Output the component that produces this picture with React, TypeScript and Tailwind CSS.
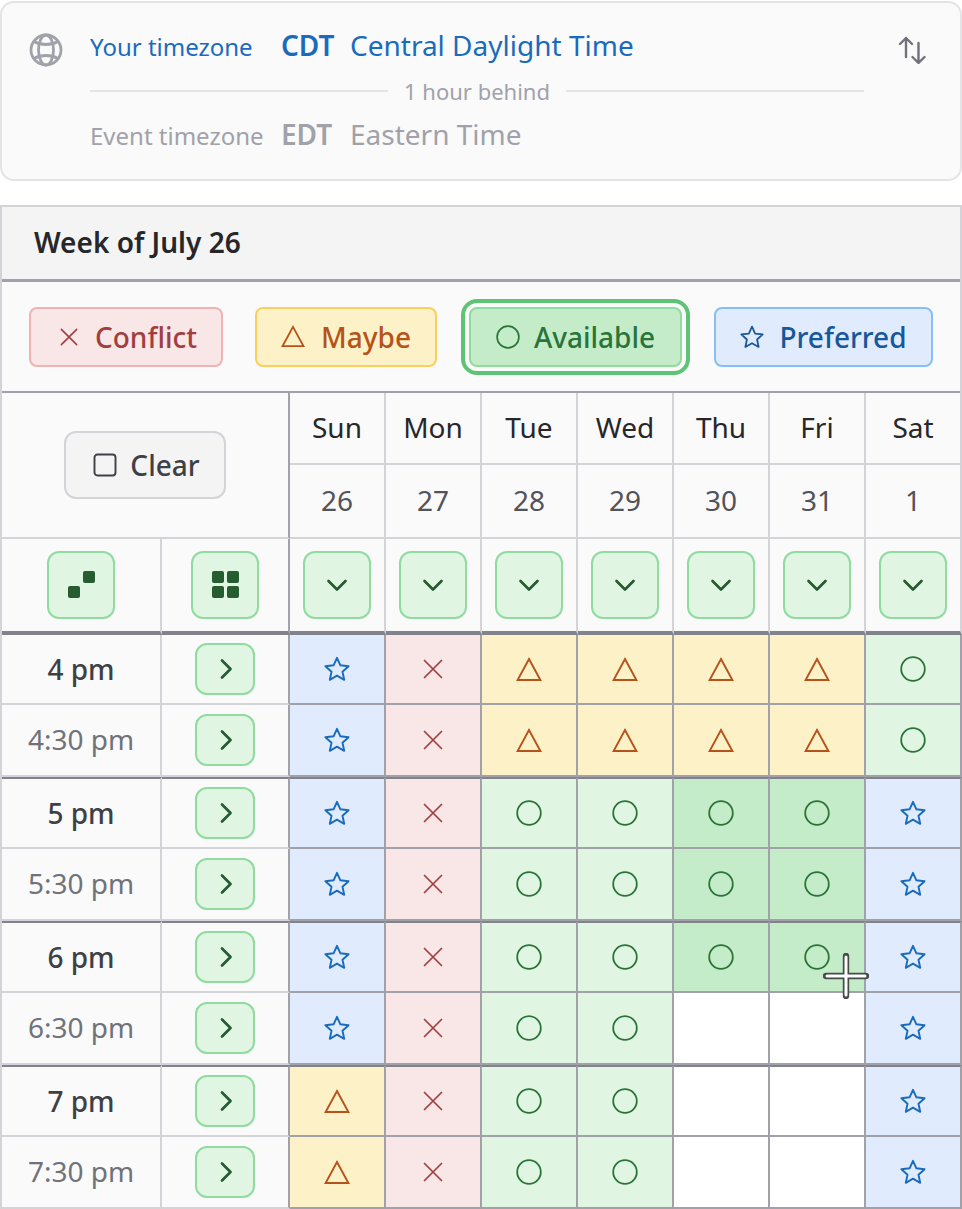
import React from 'react';

type Mark = 's' | 'x' | 'm' | 'a' | 'A' | 'e';

const days = [
  ['Sun', '26'],
  ['Mon', '27'],
  ['Tue', '28'],
  ['Wed', '29'],
  ['Thu', '30'],
  ['Fri', '31'],
  ['Sat', '1'],
];

const rows: { label: string; hour: boolean; marks: Mark[] }[] = [
  { label: '4 pm', hour: true, marks: ['s', 'x', 'm', 'm', 'm', 'm', 'a'] },
  { label: '4:30 pm', hour: false, marks: ['s', 'x', 'm', 'm', 'm', 'm', 'a'] },
  { label: '5 pm', hour: true, marks: ['s', 'x', 'a', 'a', 'A', 'A', 's'] },
  { label: '5:30 pm', hour: false, marks: ['s', 'x', 'a', 'a', 'A', 'A', 's'] },
  { label: '6 pm', hour: true, marks: ['s', 'x', 'a', 'a', 'A', 'A', 's'] },
  { label: '6:30 pm', hour: false, marks: ['s', 'x', 'a', 'a', 'e', 'e', 's'] },
  { label: '7 pm', hour: true, marks: ['m', 'x', 'a', 'a', 'e', 'e', 's'] },
  { label: '7:30 pm', hour: false, marks: ['m', 'x', 'a', 'a', 'e', 'e', 's'] },
];

const cellBg: Record<Mark, string> = {
  s: 'bg-[#e0ecfd]',
  x: 'bg-[#f9e6e7]',
  m: 'bg-[#fdf1c8]',
  a: 'bg-[#e0f6e3]',
  A: 'bg-[#c4ecc9]',
  e: 'bg-white',
};

function XIcon({ color, size = 20 }: { color: string; size?: number }) {
  return (
    <svg width={size} height={size} viewBox="0 0 20 20" fill="none" stroke={color} strokeWidth="1.7" strokeLinecap="round">
      <path d="M1.5 1.5 18.5 18.5M18.5 1.5 1.5 18.5" />
    </svg>
  );
}

function TriangleIcon({ color, size = 26 }: { color: string; size?: number }) {
  return (
    <svg width={size} height={(size * 24) / 26} viewBox="0 0 26 24" fill="none" stroke={color} strokeWidth="1.9" strokeLinejoin="miter">
      <path d="M13 2 24.4 23H1.6Z" />
    </svg>
  );
}

function CircleIcon({ color, size = 26 }: { color: string; size?: number }) {
  return (
    <svg width={size} height={size} viewBox="0 0 26 26" fill="none" stroke={color} strokeWidth="1.8">
      <circle cx="13" cy="13" r="11.8" />
    </svg>
  );
}

function StarIcon({ color, size = 26 }: { color: string; size?: number }) {
  return (
    <svg width={size} height={size} viewBox="0 0 26 26" fill="none" stroke={color} strokeWidth="1.9" strokeLinejoin="round">
      <path d="M13 1.8 16.4 9.3 24.6 10.2 18.5 15.7 20.2 23.8 13 19.7 5.8 23.8 7.5 15.7 1.4 10.2 9.6 9.3Z" />
    </svg>
  );
}

function MarkIcon({ mark }: { mark: Mark }) {
  if (mark === 's') return <StarIcon color="#1a6bbd" />;
  if (mark === 'x') return <XIcon color="#a23e40" />;
  if (mark === 'm') return <TriangleIcon color="#b5531a" />;
  if (mark === 'a' || mark === 'A') return <CircleIcon color="#2a7439" />;
  return null;
}

function GreenButton({ children, className }: { children: React.ReactNode; className: string }) {
  return (
    <div className={`flex items-center justify-center border-2 border-[#8fdba0] bg-[#e0f6e3] rounded-[12px] ${className}`}>
      {children}
    </div>
  );
}

function LegendButton({ className, children }: { className: string; children: React.ReactNode }) {
  return (
    <div className={`flex items-center justify-center h-[60px] rounded-[8px] border-2 text-[28px] font-medium ${className}`}>
      {children}
    </div>
  );
}

export default function App() {
  return (
    <div className="w-[962px] h-[1209px] overflow-hidden bg-white relative text-[#3f3f46] font-['Noto_Sans',sans-serif]">
      {/* timezone card */}
      <div className="mt-px h-[180px] border-2 border-[#e4e4e7] rounded-[14px] bg-[#fafafa] flex pl-[26px] pr-[34px] pt-[13px]">
        <svg className="mt-[16px] shrink-0" width="36" height="36" viewBox="0 0 36 36" fill="none" stroke="#a1a1aa" strokeWidth="2.8">
          <circle cx="18" cy="18" r="15" />
          <ellipse cx="18" cy="18" rx="7.5" ry="15" />
          <path d="M6 9.5C13 13.5 23 13.5 30 9.5M6 26.5C13 22.5 23 22.5 30 26.5" />
        </svg>
        <div className="ml-[26px] w-[774px] shrink-0 flex flex-col">
          <div className="h-[62px] flex items-baseline pt-[8px] text-[#1a6bbd]">
            <span className="text-[24px] w-[191px]">Your timezone</span>
            <span className="text-[28px] font-semibold w-[69px]">CDT</span>
            <span className="text-[28px]">Central Daylight Time</span>
          </div>
          <div className="flex items-center h-[26px] text-[22px] text-[#a1a1aa]">
            <div className="h-[2px] flex-1 bg-[#e4e4e7]" />
            <span className="px-[16px]">1 hour behind</span>
            <div className="h-[2px] flex-1 bg-[#e4e4e7]" />
          </div>
          <div className="h-[60px] flex items-baseline pt-[9px] text-[#a1a1aa]">
            <span className="text-[24px] w-[191px]">Event timezone</span>
            <span className="text-[28px] font-semibold w-[69px]">EDT</span>
            <span className="text-[28px]">Eastern Time</span>
          </div>
        </div>
        <svg className="mt-[20px] ml-[34px] shrink-0" width="28" height="28" viewBox="0 0 28 28" fill="none" stroke="#71717a" strokeWidth="2.4" strokeLinecap="round" strokeLinejoin="round">
          <path d="M8 21V2M2 8l6-6 6 6M20.5 7v20M14.5 21l6 6 6-6" />
        </svg>
      </div>

      {/* availability table */}
      <div className="mt-[24px] border-2 border-b-0 border-[#d4d4d8]">
        <div className="h-[75px] bg-[#f4f4f5] border-b-[3px] border-[#a1a1aa] flex items-center pl-[32px] pb-[2px] text-[28px] font-semibold text-[#27272a]">
          Week of July 26
        </div>
        <div className="h-[111px] bg-[#fafafa] border-b-2 border-[#a1a1aa] flex items-center gap-[32px] pl-[27px]">
          <LegendButton className="w-[194px] gap-[17px] pl-[5px] bg-[#f9e6e7] border-[#efb3b5] text-[#a23e40]">
            <XIcon color="#a23e40" size={18} />
            Conflict
          </LegendButton>
          <LegendButton className="w-[182px] gap-[16px] bg-[#fdf1c8] border-[#fbcf5c] text-[#b5531a]">
            <TriangleIcon color="#b5531a" size={24} />
            Maybe
          </LegendButton>
          <LegendButton className="w-[213px] gap-[14px] bg-[#c4ecc9] border-[#8fdba0] text-[#2a7439] outline-[4px] outline-offset-[4px] outline-[#5cc474]">
            <CircleIcon color="#2a7439" size={24} />
            Available
          </LegendButton>
          <LegendButton className="w-[219px] gap-[15px] bg-[#e0ecfd] border-[#85bff5] text-[#17579b]">
            <StarIcon color="#17579b" size={24} />
            Preferred
          </LegendButton>
        </div>

        <div className="grid grid-cols-[160px_128px_repeat(7,96px)] bg-[#fafafa] -mr-[2px]">
          <div className="col-span-2 row-span-2 border-r-2 border-b-2 border-r-[#a1a1aa] border-b-[#d4d4d8] flex items-center justify-center">
            <div className="w-[162px] h-[68px] rounded-[12px] border-2 border-[#d4d4d8] bg-[#f4f4f5] flex items-center justify-center gap-[13px] pl-[3px] pb-[1px] text-[28px] font-medium">
              <svg width="24" height="24" viewBox="0 0 24 24" fill="none" stroke="#3f3f46" strokeWidth="1.9">
                <rect x="1.5" y="1.5" width="21" height="21" rx="3" />
              </svg>
              Clear
            </div>
          </div>
          {days.map(([d]) => (
            <div key={d} className="h-[72px] pb-[2px] border-r-2 border-b-2 border-r-[#d4d4d8] border-b-[#d4d4d8] flex items-center justify-center text-[28px] text-[#27272a]">
              {d}
            </div>
          ))}
          {days.map(([d, n]) => (
            <div key={d} className="h-[74px] pb-[2px] border-r-2 border-b-2 border-r-[#d4d4d8] border-b-[#d4d4d8] flex items-center justify-center text-[28px] text-[#52525b]">
              {n}
            </div>
          ))}

          <div className="h-[96px] pb-[1px] border-r-2 border-r-[#d4d4d8] border-b-[4px] border-b-[#82828c] flex items-center justify-center">
            <GreenButton className="w-[68px] h-[68px]">
              <svg width="27" height="27" viewBox="0 0 27 27" fill="#265c2f">
                <rect y="15" width="12" height="12" rx="2" />
                <rect x="15" width="12" height="12" rx="2" />
              </svg>
            </GreenButton>
          </div>
          <div className="h-[96px] pb-[1px] border-r-2 border-r-[#a1a1aa] border-b-[4px] border-b-[#82828c] flex items-center justify-center">
            <GreenButton className="w-[68px] h-[68px]">
              <svg width="27" height="27" viewBox="0 0 27 27" fill="#265c2f">
                <rect width="12" height="12" rx="2" />
                <rect x="15" width="12" height="12" rx="2" />
                <rect y="15" width="12" height="12" rx="2" />
                <rect x="15" y="15" width="12" height="12" rx="2" />
              </svg>
            </GreenButton>
          </div>
          {days.map(([d]) => (
            <div key={d} className="h-[96px] pb-[1px] border-r-2 border-r-[#d4d4d8] border-b-[4px] border-b-[#82828c] flex items-center justify-center">
              <GreenButton className="w-[68px] h-[68px]">
                <svg className="mt-[2px]" width="22" height="13" viewBox="0 0 22 13" fill="none" stroke="#265c2f" strokeWidth="2.7" strokeLinecap="round" strokeLinejoin="round">
                  <path d="M2.5 2 11 10.5 19.5 2" />
                </svg>
              </GreenButton>
            </div>
          ))}

          {rows.map((r, i) => {
            const height = i === 0 ? 'h-[70px]' : 'h-[72px]';
            const top = r.hour && i > 0 ? 'border-t-2 border-t-[#82828c]' : '';
            return (
              <React.Fragment key={r.label}>
                <div className={`${height} ${top} border-b-2 border-r-2 border-r-[#d4d4d8] border-b-[#d4d4d8] flex items-center justify-center text-[28px] ${r.hour ? 'font-medium text-[#3f3f46] pb-[1px]' : 'text-[#71717a] pb-[2px]'}`}>
                  {r.label}
                </div>
                <div className={`${height} ${top} border-b-2 border-r-2 border-r-[#a1a1aa] border-b-[#d4d4d8] flex items-center justify-center`}>
                  <GreenButton className="w-[60px] h-[52px]">
                    <svg className="ml-[2px]" width="13" height="22" viewBox="0 0 13 22" fill="none" stroke="#265c2f" strokeWidth="2.7" strokeLinecap="round" strokeLinejoin="round">
                      <path d="M2 2.5 10.5 11 2 19.5" />
                    </svg>
                  </GreenButton>
                </div>
                {r.marks.map((m, j) => (
                  <div key={j} className={`${height} ${top} ${cellBg[m]} border-b-2 border-r-2 border-r-[#a1a1aa] border-b-[#a1a1aa] flex items-center justify-center`}>
                    <MarkIcon mark={m} />
                  </div>
                ))}
              </React.Fragment>
            );
          })}
        </div>
      </div>

      {/* crosshair cursor */}
      <svg className="absolute left-[823px] top-[953px]" width="46" height="46" viewBox="0 0 46 46" fill="none" strokeLinecap="round">
        <path d="M23 3v40M3 23h40" stroke="#474b48" strokeWidth="6.4" />
        <path d="M23 4v38M4 23h38" stroke="#ffffff" strokeWidth="3" />
      </svg>
    </div>
  );
}
